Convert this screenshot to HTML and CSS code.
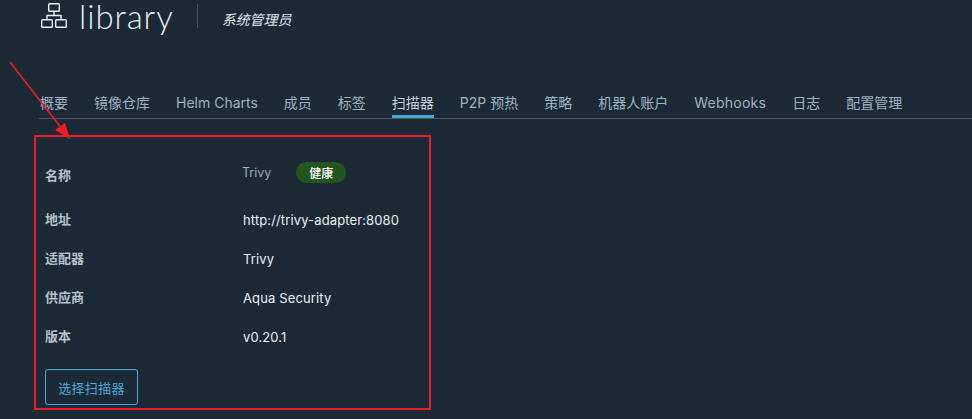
FILE: index.html
```html
<!DOCTYPE html>
<html lang="zh-CN">
<head>
<meta charset="utf-8">
<title>library</title>
<link rel="stylesheet" href="styles.css">
</head>
<body>
<main class="page">
  <header class="title-row">
    <svg class="project-icon" width="28" height="28" viewBox="0 0 28 28" fill="none" stroke="#e9eff2" stroke-width="1.4">
      <rect x="8.7" y="1.7" width="10.6" height="7.6" rx="0.8"/>
      <rect x="1.7" y="17.7" width="10.6" height="7.6" rx="0.8"/>
      <rect x="15.7" y="17.7" width="10.6" height="7.6" rx="0.8"/>
      <path d="M14 9.5V13.5M7 17.5V13.5H21V17.5"/>
    </svg>
    <h1 class="project-name">library</h1>
    <span class="divider"></span>
    <span class="role">系统管理员</span>
  </header>
  <nav class="tabs">
    <a class="tab">概要</a>
    <a class="tab">镜像仓库</a>
    <a class="tab">Helm Charts</a>
    <a class="tab">成员</a>
    <a class="tab">标签</a>
    <a class="tab active">扫描器</a>
    <a class="tab">P2P 预热</a>
    <a class="tab">策略</a>
    <a class="tab">机器人账户</a>
    <a class="tab tab-wide">Webhooks</a>
    <a class="tab">日志</a>
    <a class="tab">配置管理</a>
  </nav>
  <section class="scanner">
    <div class="row row-name">
      <span class="label">名称</span>
      <span class="value muted">Trivy</span>
      <span class="badge">健康</span>
    </div>
    <div class="row">
      <span class="label">地址</span>
      <span class="value">http://trivy-adapter:8080</span>
    </div>
    <div class="row">
      <span class="label">适配器</span>
      <span class="value">Trivy</span>
    </div>
    <div class="row">
      <span class="label">供应商</span>
      <span class="value">Aqua Security</span>
    </div>
    <div class="row">
      <span class="label">版本</span>
      <span class="value">v0.20.1</span>
    </div>
    <button class="select-btn" type="button">选择扫描器</button>
  </section>
</main>
<div class="red-box"></div>
<svg class="red-arrow" width="80" height="90" viewBox="0 0 80 90" fill="none">
  <path d="M10 62L62 129" transform="translate(0 -62)" stroke="#ee1c25" stroke-width="1.6"/>
  <path d="M70 77L55 68L65 61Z" fill="#ee1c25"/>
</svg>
</body>
</html>
```

FILE: styles.css
```css
* {
  box-sizing: border-box;
}

html,
body {
  margin: 0;
  height: 100%;
  overflow: hidden;
  background: #1c2a35;
}

body {
  position: relative;
  font-family: Inter, "Noto Sans CJK SC", sans-serif;
  color: #e9eff2;
}

.page {
  padding-left: 39px;
}

.title-row {
  display: flex;
  align-items: center;
  height: 32px;
}

.project-icon {
  flex: none;
  margin-left: 1px;
}

.project-name {
  margin: 0 0 0 11px;
  font-family: Lato, sans-serif;
  font-size: 33px;
  font-weight: 300;
  line-height: 32px;
  letter-spacing: 0.9px;
  color: #e6eef2;
}

.divider {
  width: 1px;
  height: 24px;
  margin: 0 24px 0 23px;
  background: #46545e;
}

.role {
  font-size: 14px;
  font-style: italic;
  color: #dfe6ea;
  margin-top: 5px;
}

.tabs {
  display: flex;
  gap: 26px;
  height: 87px;
  padding: 60px 0 0 1px;
  border-bottom: 1px solid #47545e;
}

.tab {
  height: 26px;
  font-size: 14px;
  line-height: 21px;
  color: #9db4c5;
}

.tab-wide {
  letter-spacing: 0.25px;
}

.tab.active {
  color: #c6d3dc;
  border-bottom: 3px solid #4aa8d8;
}

.scanner {
  display: flex;
  flex-direction: column;
  padding: 33px 0 0 6px;
}

.row {
  display: flex;
  align-items: center;
  height: 39px;
  font-size: 13px;
}

.row-name {
  height: 44px;
  margin-bottom: 4.5px;
}

.label {
  width: 198px;
  margin-top: -4px;
  font-size: 13px;
  font-weight: 700;
  color: #b5c3cd;
}

.row-name .label {
  margin-top: 1px;
}

.value {
  letter-spacing: 0.13px;
  color: #e9eff2;
}

.muted {
  color: #9aa9b4;
  letter-spacing: 0;
  margin-right: 25px;
  margin-top: -3px;
  margin-left: -1px;
  font-size: 12.5px;
}

.badge {
  display: flex;
  align-items: center;
  justify-content: center;
  width: 50px;
  height: 21px;
  margin-top: -3px;
  border-radius: 11px;
  background: #23561f;
  color: #fff;
  font-size: 12px;
  font-weight: 500;
}

.select-btn {
  width: 93px;
  height: 36px;
  margin-top: 12.5px;
  padding: 0;
  border: 1px solid #4aa8d8;
  border-radius: 3px;
  background: transparent;
  color: #4aa8d8;
  font-family: inherit;
  font-size: 13px;
  letter-spacing: 0.3px;
}

.red-box {
  position: absolute;
  left: 34px;
  top: 135px;
  width: 397px;
  height: 275px;
  border: 2px solid #ee1c25;
}

.red-arrow {
  position: absolute;
  left: 0;
  top: 62px;
}
```
